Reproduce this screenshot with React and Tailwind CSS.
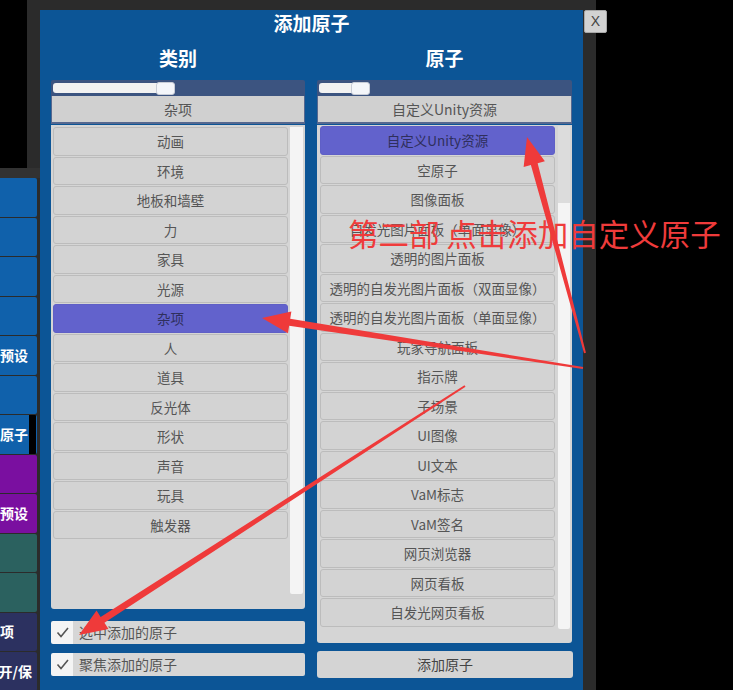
import React from 'react';
import clsx from 'clsx';

const categories = ['动画', '环境', '地板和墙壁', '力', '家具', '光源', '杂项', '人', '道具', '反光体', '形状', '声音', '玩具', '触发器'];

const atoms = [
  '自定义Unity资源',
  '空原子',
  '图像面板',
  '自发光图片面板（单面显像）',
  '透明的图片面板',
  '透明的自发光图片面板（双面显像）',
  '透明的自发光图片面板（单面显像）',
  '玩家导航面板',
  '指示牌',
  '子场景',
  'UI图像',
  'UI文本',
  'VaM标志',
  'VaM签名',
  '网页浏览器',
  '网页看板',
  '自发光网页看板',
];

const sideButtons = [
  { color: 'bg-[#1061ab]', label: '' },
  { color: 'bg-[#1061ab]', label: '' },
  { color: 'bg-[#1061ab]', label: '' },
  { color: 'bg-[#1061ab]', label: '' },
  { color: 'bg-[#1061ab]', label: '预设', pad: 'pr-[9px]' },
  { color: 'bg-[#1061ab]', label: '' },
  { color: 'bg-[#1061ab]', label: '原子', pad: 'pr-[1px]', strip: true },
  { color: 'bg-[#7a0fa0]', label: '' },
  { color: 'bg-[#7a0fa0]', label: '预设', pad: 'pr-[9px]' },
  { color: 'bg-[#2b615f]', label: '' },
  { color: 'bg-[#2b615f]', label: '' },
  { color: 'bg-[#2c3160]', label: '项', pad: 'pr-[23px]' },
  { color: 'bg-[#2c3160]', label: '开/保', pad: 'pr-[5px]' },
];

// tail -> tip, drawn as a tapered shaft with a triangular head
const arrows = [
  { from: [585, 353], to: [527, 137] },
  { from: [583, 368], to: [262, 318] },
  { from: [465, 386], to: [79, 635] },
];

function arrowPoints({ from, to }) {
  const dx = to[0] - from[0];
  const dy = to[1] - from[1];
  const len = Math.hypot(dx, dy);
  const ux = dx / len;
  const uy = dy / len;
  const px = -uy;
  const py = ux;
  const head = 28;
  const bx = to[0] - ux * head;
  const by = to[1] - uy * head;
  const pts = [
    [from[0] + px * 1, from[1] + py * 1],
    [bx + px * 3.5, by + py * 3.5],
    [bx + px * 11, by + py * 11],
    to,
    [bx - px * 11, by - py * 11],
    [bx - px * 3.5, by - py * 3.5],
    [from[0] - px * 1, from[1] - py * 1],
  ];
  return pts.map(p => p.join(',')).join(' ');
}

function Item({ label, active }) {
  return (
    <div
      className={clsx(
        'h-[28.5px] mb-[1px] shrink-0 flex items-center justify-center rounded-[3px] border text-[13.5px] whitespace-nowrap',
        active ? 'bg-[#6262cc] border-[#5f5fc6] text-[#2f2f5c]' : 'bg-[#d3d3d3] border-[#bcbcbc] text-[#555]'
      )}
    >
      {label}
    </div>
  );
}

function Slider({ fill }) {
  return (
    <div className="h-[16px] bg-[#3c5480] rounded-t-[2px] flex items-center px-[2px]">
      <div className={clsx('h-[10px] bg-[#f2f2f2] rounded-l-[3px]', fill)} />
      <div className="w-[19px] h-[13px] -ml-[2px] bg-[#f4f6fa] rounded-[3px] border border-[#c8ccd6]" />
    </div>
  );
}

function Dropdown({ label }) {
  return (
    <div className="h-[28px] bg-[#d0d0d0] border-x border-b-2 border-[#56688f] flex items-center justify-center text-[14px] text-[#555]">
      {label}
    </div>
  );
}

function Check({ label, className }) {
  return (
    <div className={clsx('h-[23px] flex rounded-[2px] overflow-hidden', className)}>
      <div className="w-[22px] bg-[#f4f4f4] flex items-center justify-center">
        <svg width="13" height="11" viewBox="0 0 13 11" fill="none">
          <path d="M1.5 5.5 L5 9.5 L12 1" stroke="#555" strokeWidth="1.6" />
        </svg>
      </div>
      <div className="flex-1 bg-[#d6d6d6] pl-[6px] flex items-center text-[14px] text-[#555]">{label}</div>
    </div>
  );
}

export default function App() {
  return (
    <div className="relative w-[733px] h-[690px] bg-black overflow-hidden flex font-['Noto_Sans_CJK_SC','Liberation_Sans',sans-serif]">
      {/* side menu */}
      <div className="w-[40px] flex flex-col bg-[#2b2b2b]">
        <div className="h-[168px] w-[27px] bg-black shrink-0" />
        <div className="h-[10px] bg-[#323232] shrink-0" />
        <div className="w-[37px] flex flex-col gap-[1px]">
          {sideButtons.map((b, i) => (
            <div
              key={i}
              className={clsx('h-[38.5px] shrink-0 flex items-center justify-end overflow-hidden rounded-r-[2px] text-[14px] font-bold text-white whitespace-nowrap', b.color, b.pad)}
            >
              {b.label}
              {b.strip && <div className="w-[8px] h-full bg-black ml-[1px]" />}
            </div>
          ))}
        </div>
      </div>

      {/* dialog */}
      <div className="w-[543px] bg-[#2b2b2b] pt-[10px]">
        <div className="h-[680px] bg-[#0c5596] flex flex-col text-white">
          <div className="h-[26px] flex items-center justify-center text-[19px] font-bold">添加原子</div>
          <div className="flex gap-[12px] pl-[11px]">
            {/* categories */}
            <div className="w-[254px] flex flex-col">
              <div className="h-[44px] pt-[10px] text-center text-[19px] leading-[24px] font-bold">类别</div>
              <Slider fill="w-[105px]" />
              <Dropdown label="杂项" />
              <div className="h-[484px] mt-[1px] bg-[#d5d5d5] rounded-b-[3px] flex items-start pl-[2px] pt-[2px] gap-[2px]">
                <div className="w-[235px] flex flex-col">
                  {categories.map((c, i) => (
                    <Item key={c} label={c} active={i === 6} />
                  ))}
                </div>
                <div className="w-[13px] h-[467px] bg-[#f4f4f4] rounded-b-[2px]" />
              </div>
              <Check label="选中添加的原子" className="mt-[12px]" />
              <Check label="聚焦添加的原子" className="mt-[9px]" />
            </div>

            {/* atoms */}
            <div className="w-[255px] flex flex-col">
              <div className="h-[44px] pt-[10px] text-center text-[19px] leading-[24px] font-bold">原子</div>
              <Slider fill="w-[34px]" />
              <Dropdown label="自定义Unity资源" />
              <div className="h-[518px] mt-[1px] bg-[#d5d5d5] rounded-b-[3px] flex items-start pl-[3px] pt-[1px] gap-[3px]">
                <div className="w-[235px] flex flex-col">
                  {atoms.map((a, i) => (
                    <Item key={a} label={a} active={i === 0} />
                  ))}
                </div>
                <div className="w-[12px] h-[503px] flex flex-col">
                  <div className="h-[77px] bg-[#dcdcdc]" />
                  <div className="flex-1 bg-[#f4f4f4] rounded-b-[2px]" />
                </div>
              </div>
              <div className="mt-[8px] h-[27px] w-[256px] bg-[#d4d4d4] rounded-[3px] flex items-center justify-center text-[14px] text-[#444]">
                添加原子
              </div>
            </div>
          </div>
        </div>
      </div>

      {/* window edge with close button */}
      <div className="relative w-[13px] bg-[#2b2b2b]">
        <div className="absolute left-[1px] top-[10px] w-[23px] h-[23px] bg-[#d2d2d2] rounded-[2px] border border-[#a8a8a8] flex items-center justify-center text-[14px] text-[#444] font-['Liberation_Sans',sans-serif]">
          X
        </div>
      </div>

      {/* annotations */}
      <svg className="absolute inset-0 pointer-events-none" width="733" height="690" viewBox="0 0 733 690">
        {arrows.map((a, i) => (
          <polygon key={i} points={arrowPoints(a)} fill="#ef3a3a" />
        ))}
      </svg>
      <div className="absolute left-[348px] top-[218px] text-[30.5px] leading-none text-[#ef3b3b] whitespace-nowrap">
        第二部 点击添加自定义原子
      </div>
    </div>
  );
}
